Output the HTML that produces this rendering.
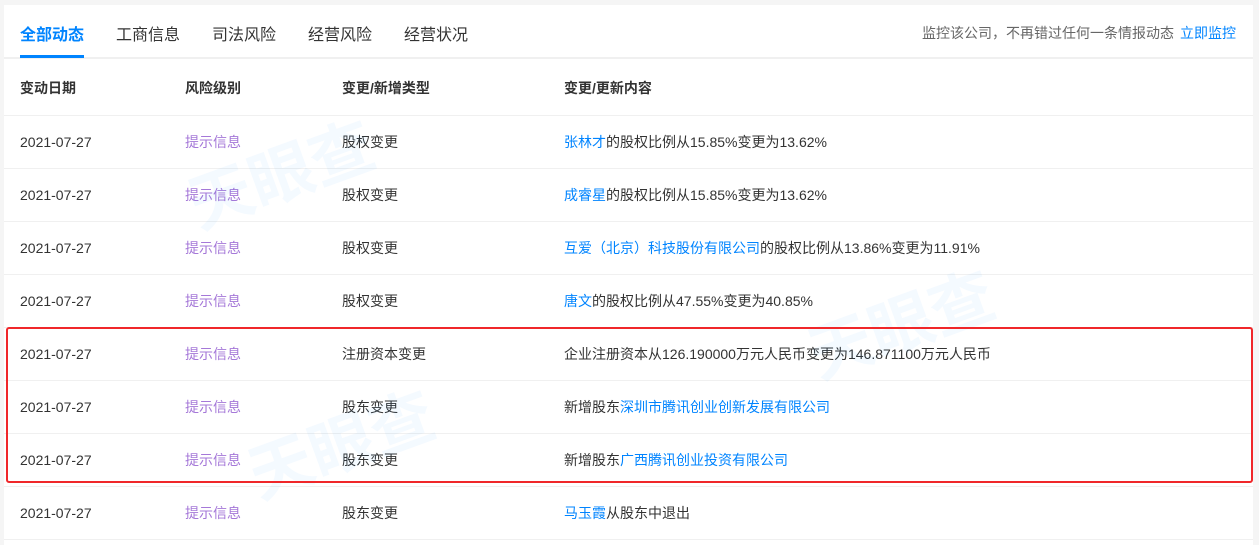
<!DOCTYPE html>
<html><head><meta charset="utf-8"><style>
body{margin:0;width:1259px;height:538px;background:#f5f5f5;font-family:"Liberation Sans","Noto Sans CJK SC",sans-serif;overflow:hidden;position:relative}
.card{position:absolute;left:4px;top:5px;width:1249px;height:540px;background:#fff}
.tabs{position:absolute;left:0;top:0;width:100%;height:52px;border-bottom:2px solid #f0f0f0}
.tab{position:absolute;top:16px;font-size:16px;color:#333}
.tab.a{color:#0084ff;font-weight:bold}
.ul{position:absolute;left:16px;top:50px;width:64px;height:3px;background:#0084ff}
.mon{position:absolute;right:17px;top:18px;font-size:14px;color:#666}
.mon a{color:#0084ff;margin-left:6px}
.row{position:absolute;left:0;width:100%;height:52px;border-bottom:1px solid #f0f0f0;font-size:14px;color:#333}
.row span{position:absolute;top:0;line-height:52px}
.h span{font-weight:bold;line-height:58px}
.c1{left:16px}.c2{left:181px}.c3{left:338px}.c4{left:560px}
.p{color:#a578d8}
.b{color:#0084ff;font-weight:normal}
.red{position:absolute;left:6px;top:327px;width:1243px;height:152px;border:2px solid #f0272a;border-radius:3px}
.wm{position:absolute;color:rgba(0,132,255,0.045);font-size:64px;font-weight:bold;transform:rotate(-20deg)}
</style></head><body>
<div class="card">
<div class="tabs">
<span class="tab a" style="left:16px">全部动态</span>
<span class="tab" style="left:112px">工商信息</span>
<span class="tab" style="left:208px">司法风险</span>
<span class="tab" style="left:304px">经营风险</span>
<span class="tab" style="left:400px">经营状况</span>
<div class="ul"></div>
<span class="mon">监控该公司，不再错过任何一条情报动态<a>立即监控</a></span>
</div>
<div class="row h" style="top:54px;height:56px"><span class="c1">变动日期</span><span class="c2">风险级别</span><span class="c3">变更/新增类型</span><span class="c4">变更/更新内容</span></div>
<div class="row" style="top:111px"><span class="c1">2021-07-27</span><span class="c2 p">提示信息</span><span class="c3">股权变更</span><span class="c4"><b class="b">张林才</b>的股权比例从15.85%变更为13.62%</span></div>
<div class="row" style="top:164px"><span class="c1">2021-07-27</span><span class="c2 p">提示信息</span><span class="c3">股权变更</span><span class="c4"><b class="b">成睿星</b>的股权比例从15.85%变更为13.62%</span></div>
<div class="row" style="top:217px"><span class="c1">2021-07-27</span><span class="c2 p">提示信息</span><span class="c3">股权变更</span><span class="c4"><b class="b">互爱（北京）科技股份有限公司</b>的股权比例从13.86%变更为11.91%</span></div>
<div class="row" style="top:270px"><span class="c1">2021-07-27</span><span class="c2 p">提示信息</span><span class="c3">股权变更</span><span class="c4"><b class="b">唐文</b>的股权比例从47.55%变更为40.85%</span></div>
<div class="row" style="top:323px"><span class="c1">2021-07-27</span><span class="c2 p">提示信息</span><span class="c3">注册资本变更</span><span class="c4">企业注册资本从126.190000万元人民币变更为146.871100万元人民币</span></div>
<div class="row" style="top:376px"><span class="c1">2021-07-27</span><span class="c2 p">提示信息</span><span class="c3">股东变更</span><span class="c4">新增股东<b class="b">深圳市腾讯创业创新发展有限公司</b></span></div>
<div class="row" style="top:429px"><span class="c1">2021-07-27</span><span class="c2 p">提示信息</span><span class="c3">股东变更</span><span class="c4">新增股东<b class="b">广西腾讯创业投资有限公司</b></span></div>
<div class="row" style="top:482px"><span class="c1">2021-07-27</span><span class="c2 p">提示信息</span><span class="c3">股东变更</span><span class="c4"><b class="b">马玉霞</b>从股东中退出</span></div>
<div class="wm" style="left:180px;top:120px">天眼查</div>
<div class="wm" style="left:800px;top:270px">天眼查</div>
<div class="wm" style="left:240px;top:390px">天眼查</div>
</div>
<div class="red"></div>
</body></html>
